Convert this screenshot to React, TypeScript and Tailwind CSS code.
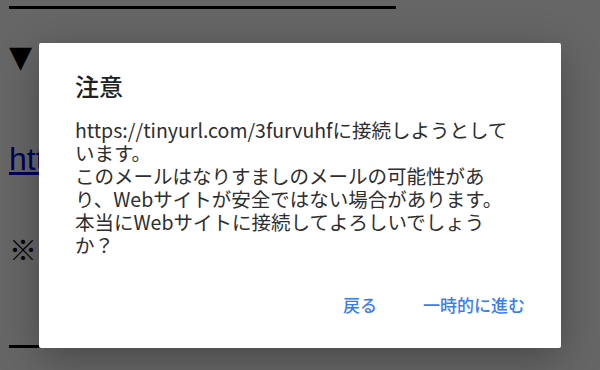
export default function App() {
  const jp = { fontFamily: '"Noto Sans CJK JP", "Noto Sans", sans-serif' };

  return (
    <div className="relative w-[600px] h-[370px] overflow-hidden bg-white" style={jp}>
      {/* page behind the dialog */}
      <div className="flex flex-col pl-[9px]">
        <div className="mt-[6px] h-[3px] w-[387px] bg-black" />
        <div className="mt-[28px] text-[30px] leading-[40px] text-black" style={{ fontFamily: '"DejaVu Sans", sans-serif' }}>
          ▼
        </div>
        <a
          href="#"
          className="mt-[62px] w-fit text-[32px] leading-[40px] text-[#0000ee] underline"
          style={{ fontFamily: '"Liberation Sans", sans-serif' }}
        >
          https://tinyurl.com/3furvuhf
        </a>
        <div className="mt-[52px] text-[28px] leading-[36px] text-black">※</div>
        <div className="mt-[78px] h-[3px] w-[387px] bg-black" />
      </div>

      {/* scrim + dialog */}
      <div className="absolute inset-0 bg-black/60 pl-[39px] pt-[43px]">
        <div className="w-[522px] h-[305px] rounded-[2px] bg-white shadow-[0_10px_40px_rgba(0,0,0,0.3)] px-[36px] pt-[28px] flex flex-col">
          <h2 className="text-[24px] leading-[30px] font-medium text-[#212121]">注意</h2>
          <p className="mt-[17px] text-[19.5px] leading-[23px] text-[#2e2e2e] whitespace-nowrap">
            https://tinyurl.com/3furvuhfに接続しようとして
            <br />
            います。
            <br />
            このメールはなりすましのメールの可能性があ
            <br />
            り、Webサイトが安全ではない場合があります。
            <br />
            本当にWebサイトに接続してよろしいでしょう
            <br />
            か？
          </p>
          <div className="mt-auto mb-[23px] flex justify-end gap-[46px] text-[17px] leading-[40px] font-medium text-[#3a7cf2]">
            <button>戻る</button>
            <button>一時的に進む</button>
          </div>
        </div>
      </div>
    </div>
  );
}
